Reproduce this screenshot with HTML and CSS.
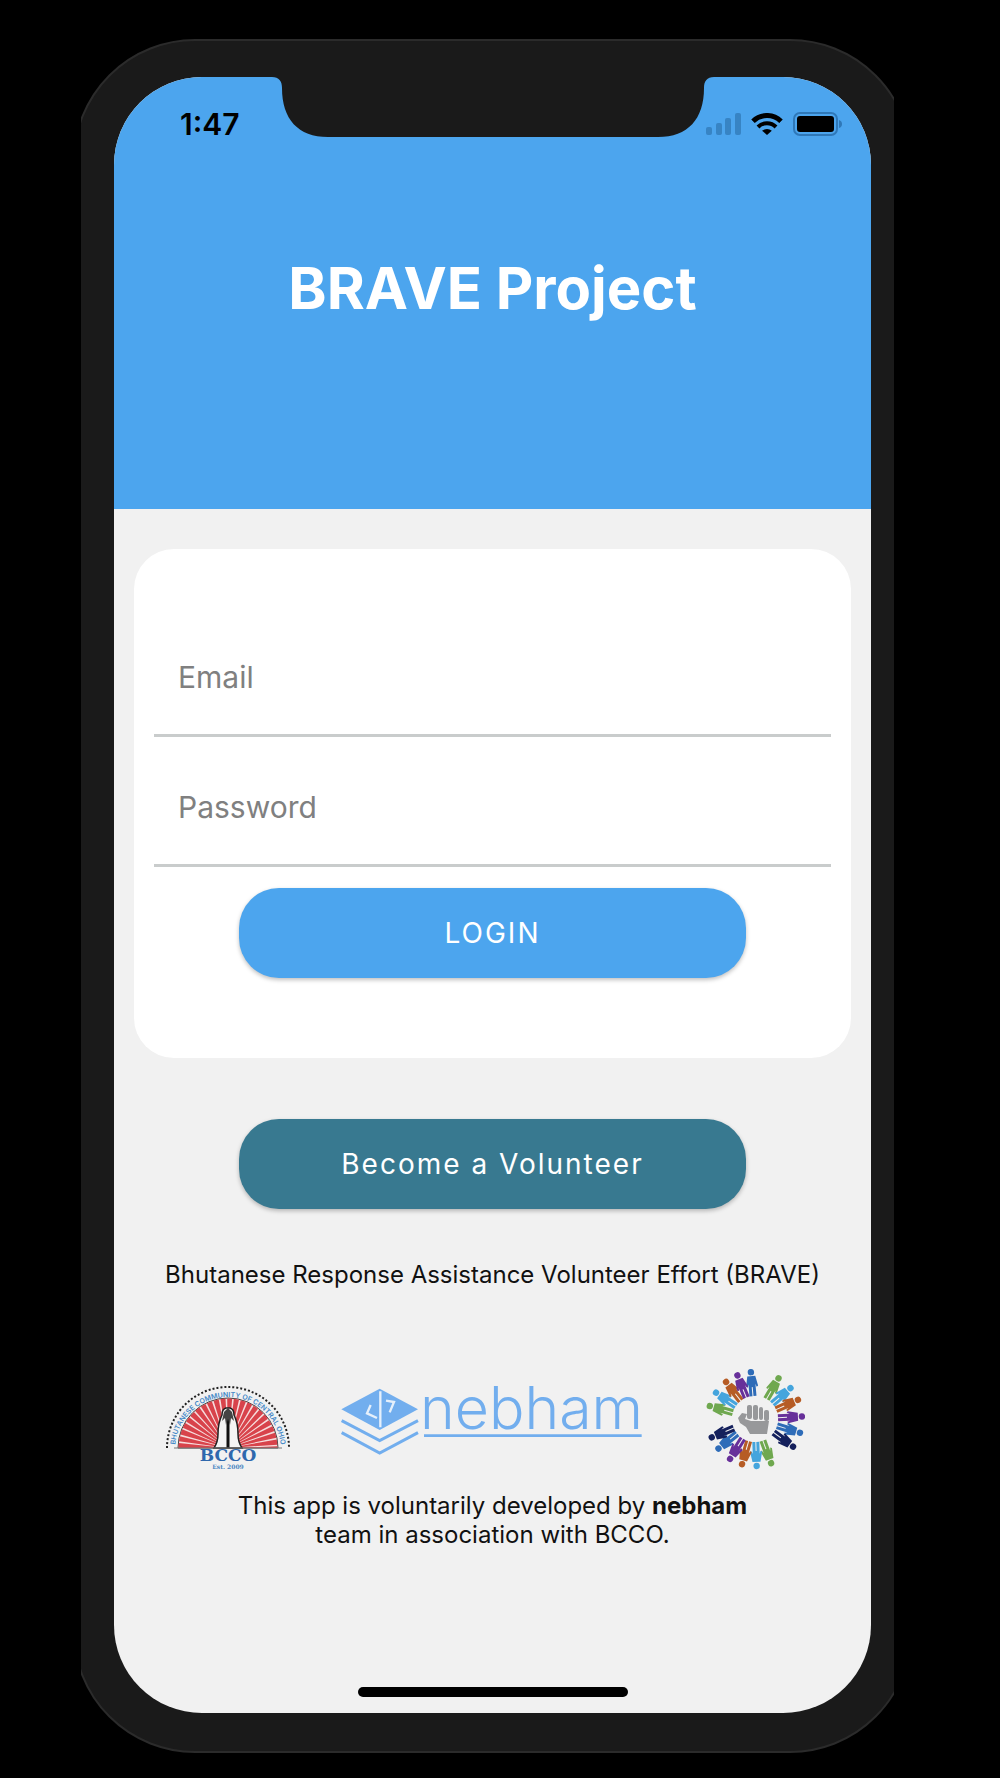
FILE: index.html
```html
<!DOCTYPE html>
<html lang="en">
<head>
    <meta charset="UTF-8">
    <meta name="viewport" content="width=device-width, initial-scale=1.0">
    <title>BRAVE Project</title>
    <link rel="stylesheet" href="styles.css">
</head>
<body>
    <div class="stage">
        <div class="device">
            <div class="screen">
                <!-- Notch -->
                <svg class="notch" viewBox="0 0 442 60" aria-hidden="true">
                    <path d="M0 0C7 0 10 4 10 11C10 42 26 60 56 60H386C416 60 432 42 432 11C432 4 435 0 442 0Z" fill="#1a1a1a"/>
                </svg>

                <header class="header">
                    <div class="status-bar">
                        <span class="time">1:47</span>
                        <div class="status-icons">
                            <svg width="35" height="22" viewBox="0 0 35 22" fill="#3784c4" aria-hidden="true">
                                <rect x="0" y="14" width="6" height="8" rx="2"/>
                                <rect x="10" y="10" width="6" height="12" rx="2"/>
                                <rect x="19" y="5" width="6" height="17" rx="2"/>
                                <rect x="29" y="0" width="6" height="22" rx="2"/>
                            </svg>
                            <svg width="32" height="22" viewBox="0 0 32 22" aria-hidden="true">
                                <g fill="none" stroke="#000" stroke-width="5">
                                    <path d="M2 8.2A20 20 0 0 1 30 8.2"/>
                                    <path d="M7 14A12.6 12.6 0 0 1 25 14" stroke-width="4"/>
                                </g>
                                <path d="M11.2 17.8A7 7 0 0 1 20.8 17.8L16 22Z"/>
                            </svg>
                            <svg width="50" height="24" viewBox="0 0 50 24" aria-hidden="true">
                                <rect x="1" y="1" width="43" height="22" rx="6" fill="none" stroke="#2f78b8" stroke-width="2"/>
                                <rect x="4" y="4" width="37" height="16" rx="3"/>
                                <path d="M46 8Q49 9 49 12T46 16Z" fill="#2f78b8"/>
                            </svg>
                        </div>
                    </div>
                    <h1>BRAVE Project</h1>
                </header>

                <!-- Login Form -->
                <form class="card">
                    <input type="email" id="email" placeholder="Email" aria-label="Email">
                    <input type="password" id="password" placeholder="Password" aria-label="Password">
                    <button type="submit" class="btn">LOGIN</button>
                </form>

                <button type="button" class="btn btn-volunteer">Become a Volunteer</button>

                <p class="tagline">Bhutanese Response Assistance Volunteer Effort (BRAVE)</p>

                <!-- Partner logos -->
                <div class="logos">
                    <svg class="logo-bcco" width="128" height="88" viewBox="0 0 128 88" role="img" aria-label="BCCO">
                        <defs>
                            <path id="arc" d="M11 66A53 53 0 0 1 117 66"/>
                        </defs>
                        <path d="M3 64A61 61 0 0 1 125 64" fill="none" stroke="#222" stroke-width="2" stroke-dasharray="2 2"/>
                        <path d="M14 64A50 50 0 0 1 114 64Z" fill="#f6dcdc" stroke="#444"/>
                        <path d="M39 64A25 25 0 0 1 89 64" fill="none" stroke="#d8434b" stroke-width="49" pathLength="89" stroke-dasharray="3 1"/>
                        <text class="arc-text"><textPath href="#arc" startOffset="50%" text-anchor="middle">BHUTANESE COMMUNITY OF CENTRAL OHIO</textPath></text>
                        <path d="M62 24Q58 25 58 31Q54 39 54 50Q54 58 50 64H78Q74 58 74 50Q74 39 70 31Q70 25 66 24Z" fill="#f4f4f4" stroke="#222" stroke-width="1.5"/>
                        <path d="M64 28V64" stroke="#111" stroke-width="3"/>
                        <path d="M60 28L64 24L68 28L70 37L67 34L66 41L64 35L62 41L61 34L58 37Z" fill="#444"/>
                        <path d="M10 64H118" stroke="#777"/>
                        <text class="bcco-name" x="64" y="77" text-anchor="middle">BCCO</text>
                        <text class="bcco-est" x="64" y="85" text-anchor="middle">Est. 2009</text>
                    </svg>

                    <svg class="logo-nebham" width="318" height="76" viewBox="30 33 954 228" role="img" aria-label="nebham">
                        <path d="M34 118L149 56L264 118L149 180Z" fill="#72aeee"/>
                        <path d="M151 64V172M122 105L111 130L141 144M168 92L192 96L179 127" fill="none" stroke="#e6f0fb" stroke-width="7"/>
                        <path d="M35 152L149 212L264 152M35 188L149 249L264 188" fill="none" stroke="#72aeee" stroke-width="9"/>
                        <text class="nebham-name" x="270" y="178">nebham</text>
                        <path d="M282 197H935" stroke="#72aeee" stroke-width="8"/>
                    </svg>

                    <svg width="100" height="106" viewBox="-50 -53 100 106" role="img" aria-label="Community hands">
                        <defs>
                            <g id="person">
                                <circle cy="-47" r="3.2"/>
                                <path d="M-4 -43H4L6 -33L4.5 -32L3.5 -35V-23H.5V-32H-.5V-23H-3.5V-35L-4.5 -32L-6 -33Z"/>
                            </g>
                        </defs>
                        <g fill="#2e6cb8">
                            <use href="#person" transform="rotate(-5)"/>
                            <use href="#person" transform="rotate(107)"/>
                            <use href="#person" transform="rotate(231)"/>
                        </g>
                        <g fill="#6fa84f">
                            <use href="#person" transform="rotate(30)"/>
                            <use href="#person" transform="rotate(160)"/>
                            <use href="#person" transform="rotate(286)"/>
                        </g>
                        <g fill="#45a5dd">
                            <use href="#person" transform="rotate(49)"/>
                            <use href="#person" transform="rotate(178)"/>
                            <use href="#person" transform="rotate(304)"/>
                        </g>
                        <g fill="#b65c25">
                            <use href="#person" transform="rotate(66)"/>
                            <use href="#person" transform="rotate(196)"/>
                            <use href="#person" transform="rotate(322)"/>
                        </g>
                        <g fill="#67309a">
                            <use href="#person" transform="rotate(87)"/>
                            <use href="#person" transform="rotate(212)"/>
                            <use href="#person" transform="rotate(338)"/>
                        </g>
                        <g fill="#14205c">
                            <use href="#person" transform="rotate(126)"/>
                            <use href="#person" transform="rotate(247)"/>
                        </g>
                        <g fill="#97989a">
                            <path d="M-17 -1L-13 -6L-8 -5L-10 0L-4 2H14L12 15H-5L-9 8L-15 4Z"/>
                            <rect x="-8" y="-14" width="5" height="14" rx="2"/>
                            <rect x="-2" y="-14" width="5" height="15" rx="2"/>
                            <rect x="4" y="-12" width="4" height="13" rx="2"/>
                            <rect x="9" y="-9" width="5" height="11" rx="2"/>
                        </g>
                    </svg>
                </div>

                <p class="credit">This app is voluntarily developed by <b>nebham</b><br>team in association with BCCO.</p>

                <div class="home-indicator"></div>
            </div>
        </div>
    </div>
</body>
</html>
```
FILE: styles.css
```css
* {
    margin: 0;
    padding: 0;
    box-sizing: border-box;
}

body {
    font-family: Inter, "Liberation Sans", sans-serif;
    background: #000;
    color: #111;
    padding: 39px 106px 25px 81px;
}

/* trims the sides of the phone body */
.stage {
    overflow: hidden;
}

.device {
    display: flex;
    min-height: calc(100vh - 64px);
    margin: 0 -18px 0 -8px;
    padding: 36px 39px 38px;
    background: #1a1a1a;
    border: 2px solid #2b2b2b;
    border-radius: 122px;
}

.screen {
    position: relative;
    flex: 1;
    display: flex;
    flex-direction: column;
    align-items: center;
    background: #f1f1f1;
    border-radius: 88px;
    overflow: hidden;
}

.notch {
    position: absolute;
    top: 0;
    left: 50%;
    width: 442px;
    margin-left: -221px;
}

.header {
    width: 100%;
    background: #4ca5ee;
    padding: 28px 28px 184px;
}

.status-bar {
    display: flex;
    justify-content: space-between;
    align-items: center;
    height: 38px;
    padding-left: 38px;
    color: #000;
}

.time {
    font-size: 30px;
    font-weight: 600;
}

.status-icons {
    display: flex;
    align-items: center;
    gap: 10px;
}

h1 {
    margin-top: 108px;
    font-size: 58px;
    line-height: 74px;
    font-weight: 700;
    text-align: center;
    color: #fff;
}

.card {
    display: flex;
    flex-direction: column;
    align-items: center;
    align-self: stretch;
    margin: 40px 20px 61px;
    padding: 58px 20px 80px;
    background: #fff;
    border-radius: 40px;
}

input {
    width: 100%;
    height: 130px;
    padding: 12px 24px 0;
    border: none;
    border-bottom: 3px solid #c9cccc;
    background: none;
    font-family: inherit;
    font-size: 30px;
    color: #111;
    outline: none;
}

input::placeholder {
    color: #808080;
    opacity: 1;
}

.btn {
    width: 75%;
    height: 90px;
    margin-top: 21px;
    border: none;
    border-radius: 40px;
    background: #4ca5ee;
    box-shadow: 0 2px 4px rgba(0, 0, 0, 0.25);
    font-family: inherit;
    font-size: 28px;
    letter-spacing: 2px;
    color: #fff;
    cursor: pointer;
}

.btn-volunteer {
    width: 67%;
    margin-top: 0;
    background: #387990;
}

.tagline {
    margin-top: 51px;
    font-size: 24px;
    line-height: 29px;
    text-align: center;
}

.logos {
    display: flex;
    justify-content: space-between;
    align-items: center;
    align-self: stretch;
    margin: 77px 0 19px;
    padding: 0 66px 0 50px;
}

.logo-bcco {
    align-self: flex-end;
}

.logo-nebham {
    overflow: visible;
}

.arc-text {
    font-size: 7px;
    font-weight: 600;
    fill: #3f86c6;
}

.bcco-name {
    font-family: "DejaVu Serif", serif;
    font-size: 17px;
    font-weight: 700;
    fill: #2f68ad;
}

.bcco-est {
    font-family: "DejaVu Serif", serif;
    font-size: 6px;
    font-weight: 700;
    fill: #4a86c2;
}

.nebham-name {
    font-size: 177px;
    font-weight: 300;
    fill: #72aeee;
}

.credit {
    font-size: 24px;
    line-height: 29px;
    text-align: center;
}

.home-indicator {
    width: 270px;
    height: 10px;
    margin: auto 0 16px;
    border-radius: 5px;
    background: #000;
}
```
